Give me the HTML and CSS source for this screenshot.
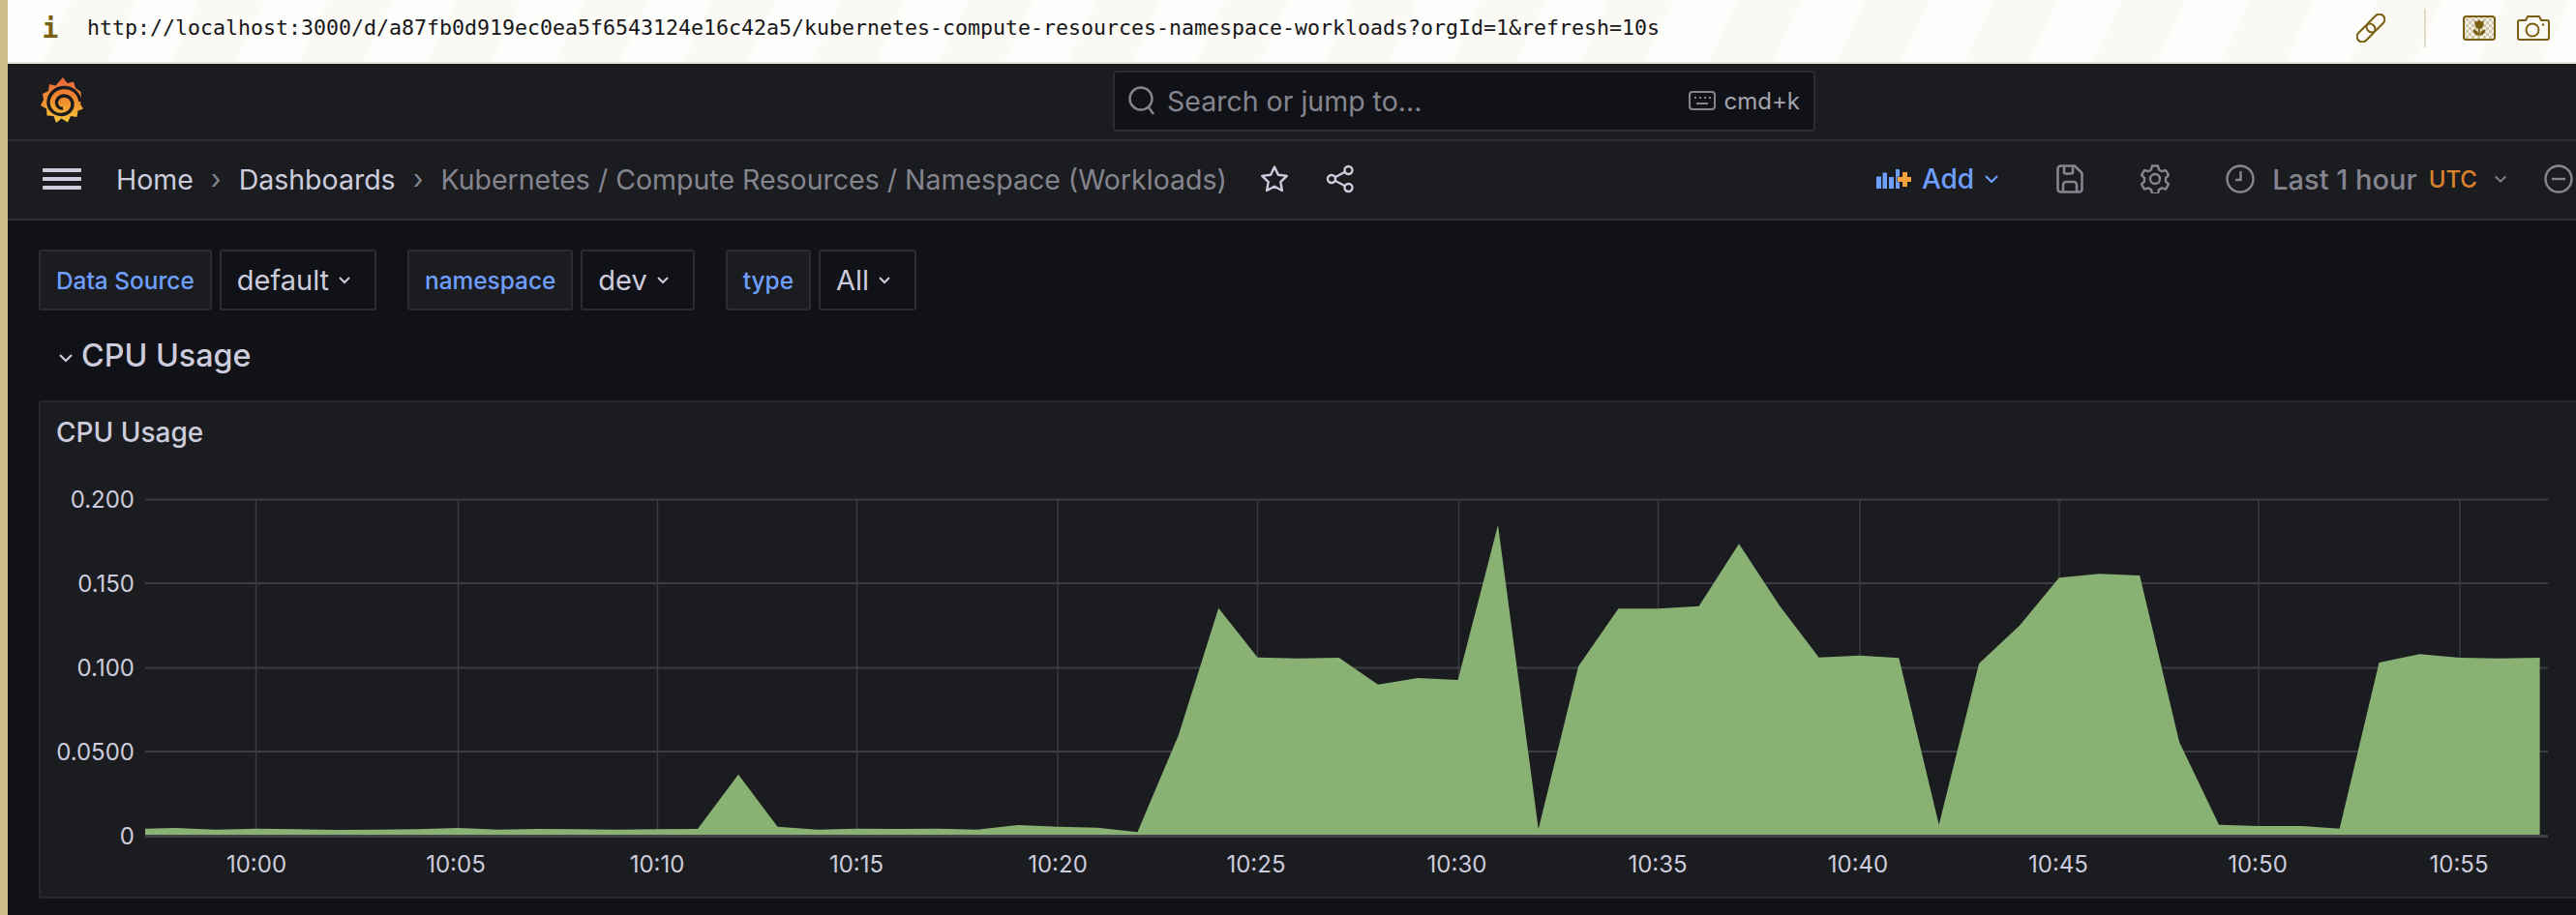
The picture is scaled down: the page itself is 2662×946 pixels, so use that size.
FILE: index.html
```html
<!DOCTYPE html>
<html lang="en">
<head>
<meta charset="utf-8">
<title>Kubernetes / Compute Resources / Namespace (Workloads)</title>
<link rel="stylesheet" href="styles.css">
</head>
<body>
<div class="edge"></div>
<div class="app">
  <header class="urlbar">
    <span class="info">i</span>
    <span class="url">http://localhost:3000/d/a87fb0d919ec0ea5f6543124e16c42a5/kubernetes-compute-resources-namespace-workloads?orgId=1&amp;refresh=10s</span>
    <svg class="ub-link" viewBox="0 0 30 30" fill="none" stroke="#7a5f12" stroke-width="2"><g transform="rotate(45 15 15)"><rect x="9.500" y="-3" width="11" height="22" rx="5.500"/><rect x="9.500" y="11" width="11" height="22" rx="5.500"/></g></svg>
    <span class="ub-sep"></span>
    <svg class="ub-tulip" viewBox="0 0 34 26"><defs><pattern id="chk" width="6" height="6" patternUnits="userSpaceOnUse"><rect width="6" height="6" fill="#f4f2e8"/><rect width="3" height="3" fill="#cfc9a8"/><rect x="3" y="3" width="3" height="3" fill="#cfc9a8"/></pattern></defs><rect x="1" y="1" width="32" height="24" rx="2.500" fill="url(#chk)" stroke="#7a5f12" stroke-width="2"/><path d="M12.500 5l2.200 1.600L17 4.600l2.300 2 2.200-1.600v4.200a4.500 4.500 0 0 1-9 0zM16.200 13h1.600v8h-1.600zM10.500 14.500c3 0 5.500 2 6 6-3.500 0-5.500-2-6-6zM23.500 14.500c-3 0-5.500 2-6 6 3.500 0 5.500-2 6-6z" fill="#7a5f12"/></svg>
    <svg class="ub-cam" viewBox="0 0 34 26" fill="none" stroke="#7a5f12" stroke-width="2" stroke-linejoin="round"><path d="M3 5h6l2-4h12l2 4h6a2 2 0 0 1 2 2v16a2 2 0 0 1-2 2H3a2 2 0 0 1-2-2V7a2 2 0 0 1 2-2z"/><circle cx="16" cy="15" r="6.500"/><circle cx="27" cy="9.500" r="1.200" fill="#7a5f12" stroke="none"/></svg>
  </header>

  <nav class="topnav">
    <svg class="logo" viewBox="0 0 44 48">
      <defs><linearGradient id="gr" x1="0" y1="0" x2="0" y2="1"><stop offset="0" stop-color="#e8623a"/><stop offset=".55" stop-color="#f0932f"/><stop offset="1" stop-color="#f6c53b"/></linearGradient></defs>
      <path d="M23 0l4.500 6 6.500-1.500 2 6.500 5.500 4 .5 9-1 3.500 3 5-5.500 2-1 6.500-6.500-1-3 6.500-6.500-4-5.500 4.500-2.500-7-7-.5-.5-7L0 29l3-6-1-6 6-3 1-7 6.500 1.500z" fill="url(#gr)"/>
      <path d="M41 25C39.500 15.500 32 10 23.500 10.500 14.500 11 8 18 8 26c0 7 6 12.500 13.500 12.500 6.500 0 11.500-5 11.500-10.500 0-5.500-4.500-9.500-9.500-9-4.500.5-7.500 4-7 8 .5 3 3 5.500 6.500 5" fill="none" stroke="#1b1c20" stroke-width="3.400"/>
    </svg>
    <div class="search">
      <svg class="i-search" viewBox="0 0 28 30" fill="none" stroke="#84858f" stroke-width="2.400"><circle cx="13" cy="13" r="11.500"/><path d="M21 22l5 7"/></svg>
      <span class="search-text">Search or jump to...</span>
      <svg class="i-kbd" viewBox="0 0 28 24" fill="none" stroke="#84858f" stroke-width="2"><rect x="1" y="3" width="26" height="18" rx="3"/><path d="M6 9h2M11 9h2M16 9h2M21 9h2M8 15h12" stroke-width="2.200"/></svg>
      <span class="search-key">cmd+k</span>
    </div>
  </nav>

  <div class="toolbar">
    <div class="burger"><span></span><span></span><span></span></div>
    <span class="crumb">Home</span>
    <span class="sep">›</span>
    <span class="crumb">Dashboards</span>
    <span class="sep">›</span>
    <span class="crumb current">Kubernetes / Compute Resources / Namespace (Workloads)</span>
    <svg class="i-star" viewBox="0 0 30 30" fill="none" stroke="#ccccdc" stroke-width="2.400" stroke-linejoin="round"><path d="M15 2.500l3.900 8.200 8.900 1.200-6.500 6.200 1.600 8.900-7.900-4.300-7.900 4.300 1.600-8.900-6.500-6.200 8.900-1.200z"/></svg>
    <svg class="i-share" viewBox="0 0 30 30" fill="none" stroke="#ccccdc" stroke-width="2.400"><circle cx="23.500" cy="6" r="4"/><circle cx="6" cy="15" r="4"/><circle cx="23.500" cy="24" r="4"/><path d="M9.600 13.200l10.300-5.400M9.600 16.800l10.300 5.400"/></svg>
    <svg class="i-add" viewBox="0 0 36 20"><path d="M0 7.500h5V20H0zM6.500 3.500h4.500V20H6.500zM13 8h5v12h-5zM20 0h4v20h-4z" fill="#6e9fff"/><path d="M27 3h5v5h5v5h-5v5h-5v-5h-5V8h5z" fill="#f2a23b" stroke="#1b1c20" stroke-width="1" paint-order="stroke"/></svg>
    <span class="add-text">Add</span>
    <svg class="chev chev-add" viewBox="0 0 16 10" fill="none" stroke="#6e9fff" stroke-width="2.200"><path d="M2 2l6 6 6-6"/></svg>
    <svg class="i-save" viewBox="0 0 28 30" fill="none" stroke="#84858f" stroke-width="2.600" stroke-linejoin="round"><path d="M4 1.500h15l7.500 7.500v16.500a3 3 0 0 1-3 3h-19a3 3 0 0 1-3-3v-21a3 3 0 0 1 3-3z"/><path d="M8 2v6a1.500 1.500 0 0 0 1.500 1.500h6A1.500 1.500 0 0 0 17 8V2M7 28v-7a3 3 0 0 1 3-3h8a3 3 0 0 1 3 3v7"/></svg>
    <svg class="i-gear" viewBox="0 0 30 30" fill="none" stroke="#84858f" stroke-width="2.400" stroke-linejoin="round"><path d="M12 1.500h6l1 4 3 1.700 4-1.200 3 5.200-3 2.800v3.600l3 2.800-3 5.200-4-1.200-3 1.700-1 4h-6l-1-4-3-1.700-4 1.200-3-5.200 3-2.800v-3.600L1 11.200 4 6l4 1.200 3-1.700z"/><circle cx="15" cy="15" r="5"/></svg>
    <svg class="i-clock" viewBox="0 0 30 30" fill="none" stroke="#84858f" stroke-width="2.400"><circle cx="15" cy="15" r="13.500"/><path d="M15.500 7v9H10"/></svg>
    <span class="range">Last 1 hour</span>
    <span class="utc">UTC</span>
    <svg class="chev chev-range" viewBox="0 0 16 10" fill="none" stroke="#84858f" stroke-width="2.200"><path d="M2 2l6 6 6-6"/></svg>
    <svg class="i-zoom" viewBox="0 0 30 30" fill="none" stroke="#84858f" stroke-width="2.400"><circle cx="15" cy="15" r="13.500"/><path d="M8 15h14"/></svg>
  </div>

  <main class="dash">
    <div class="filters">
      <span class="f-label">Data Source</span>
      <span class="f-value">default<svg class="chev-f" viewBox="0 0 14 10" fill="none" stroke="#ccccdc" stroke-width="2"><path d="M2 2l5 5 5-5"/></svg></span>
      <span class="f-label f-next">namespace</span>
      <span class="f-value">dev<svg class="chev-f" viewBox="0 0 14 10" fill="none" stroke="#ccccdc" stroke-width="2"><path d="M2 2l5 5 5-5"/></svg></span>
      <span class="f-label f-next">type</span>
      <span class="f-value">All<svg class="chev-f" viewBox="0 0 14 10" fill="none" stroke="#ccccdc" stroke-width="2"><path d="M2 2l5 5 5-5"/></svg></span>
    </div>
    <div class="row-head">
      <svg class="chev-row" viewBox="0 0 16 10" fill="none" stroke="#ccccdc" stroke-width="2.200"><path d="M2 2l6 6 6-6"/></svg>
      <span class="row-title">CPU Usage</span>
    </div>
    <section class="panel">
      <h2 class="panel-title">CPU Usage</h2>
      <svg class="chart" viewBox="42 480 2622 447" preserveAspectRatio="xMinYMin meet">
        <g class="grid">
          <path d="M150 516.500H2633M150 603H2633M150 690.500H2633M150 777H2633"/>
        </g>
        <g class="grid-v">
          <path d="M264.500 516V865M473.500 516V865M679.500 516V865M885.500 516V865M1093 516V865M1299.500 516V865M1507.500 516V865M1713.500 516V865M1922 516V865M2128 516V865M2334 516V865M2542 516V865"/>
        </g>
        <polygon class="area" points="150,856.700 181.600,856 223,857.700 264.500,856.700 306,857.300 347.400,858 388.800,857.700 430.300,857.300 473.500,856 513.200,857.700 555,857 596,857.300 637,857.700 679.500,857.300 721,857 763,800.700 803.500,854.700 845,857.700 885.500,856.700 927.500,857 969,856.700 1010.500,857.700 1052,853 1093,854.700 1134,855.700 1175.500,860.300 1217.900,760 1259.200,628.700 1299.500,679.700 1341.300,680.700 1383.700,680 1424,707.700 1465.300,701 1506.600,703 1548,542.700 1589.800,857.300 1631,689 1672.400,629.300 1713.300,629.300 1755.600,626.700 1797,562.300 1838.800,626 1879.600,679.700 1921.900,677.700 1962.300,680.300 2003.700,852.700 2045.100,686 2087,646.700 2127.900,597.300 2169.300,593.300 2211.200,595 2252.100,767.300 2293,852.700 2333.900,854 2378.800,854 2417.700,856.700 2458.500,685 2500.400,676.300 2541.800,680 2583.200,680.700 2624.600,680 2624.600,863 150,863"/>
        <path class="axis" d="M150 864.500H2633"/>
        <g class="ylabels">
          <text x="139" y="525">0.200</text>
          <text x="139" y="611.500">0.150</text>
          <text x="139" y="699">0.100</text>
          <text x="139" y="785.500">0.0500</text>
          <text x="139" y="873">0</text>
        </g>
        <g class="xlabels">
          <text x="265" y="902">10:00</text>
          <text x="471" y="902">10:05</text>
          <text x="679" y="902">10:10</text>
          <text x="885" y="902">10:15</text>
          <text x="1093" y="902">10:20</text>
          <text x="1298" y="902">10:25</text>
          <text x="1505.500" y="902">10:30</text>
          <text x="1713" y="902">10:35</text>
          <text x="1920" y="902">10:40</text>
          <text x="2127" y="902">10:45</text>
          <text x="2333" y="902">10:50</text>
          <text x="2541" y="902">10:55</text>
        </g>
      </svg>
    </section>
  </main>
</div>
</body>
</html>
```
FILE: styles.css
```css
* { box-sizing: border-box; }
html, body { margin: 0; height: 100%; }
body {
  display: flex;
  width: 2662px;
  height: 946px;
  overflow: hidden;
  background: #111217;
  font-family: Inter, "Liberation Sans", sans-serif;
  color: #ccccdc;
}
.edge { width: 8px; flex: none; background: #cdbf87; }
.app { width: 2654px; flex: none; display: flex; flex-direction: column; overflow: hidden; }

.urlbar {
  height: 66px;
  flex: none;
  display: flex;
  align-items: center;
  border-bottom: 2px solid #e6e5df;
  background: repeating-linear-gradient(115deg, #fdfdfb 0 60px, #faf9f4 60px 120px);
  padding-bottom: 6px;
}
.info {
  margin-left: 37px;
  width: 14px;
  font: 700 28px "DejaVu Sans Mono", monospace;
  color: #7a5f12;
  display: flex;
  justify-content: center;
}
.url {
  margin-left: 31px;
  font: 400 21.6px/28px "DejaVu Sans Mono", monospace;
  color: #17171a;
  white-space: nowrap;
}
.ub-link { width: 30px; height: 30px; margin-left: 720px; flex: none; }
.ub-sep { width: 2px; height: 40px; background: #e2dcc6; margin-left: 40px; flex: none; }
.ub-tulip { width: 34px; height: 26px; margin-left: 38px; flex: none; }
.ub-cam { width: 34px; height: 26px; margin-left: 22px; flex: none; }

.topnav {
  height: 80px;
  flex: none;
  display: flex;
  align-items: center;
  padding: 0 0 2px 34px;
  background: #1b1c20;
  border-bottom: 2px solid #2a2c30;
}
.logo { width: 44px; height: 48px; flex: none; }
.search {
  margin-left: 1064px;
  width: 726px;
  height: 63px;
  display: flex;
  align-items: center;
  padding: 0 14px 0 14px;
  background: #111217;
  border: 2px solid #2c2d32;
  border-radius: 4px;
}
.i-search { width: 28px; height: 30px; flex: none; }
.search-text { margin-left: 12px; font-size: 28.5px; color: #84858f; flex: 1; }
.i-kbd { width: 28px; height: 24px; flex: none; }
.search-key { margin-left: 9px; font-size: 24px; color: #a3a4ad; }

.toolbar {
  height: 82px;
  flex: none;
  display: flex;
  align-items: center;
  padding: 0 0 2px 36px;
  background: #1b1c20;
  border-bottom: 2px solid #2e3035;
  white-space: nowrap;
}
.burger { width: 40px; display: flex; flex-direction: column; gap: 5px; flex: none; }
.burger span { height: 4px; background: #ccccdc; border-radius: 1px; }
.crumb { font-size: 28.5px; color: #ccccdc; }
.burger + .crumb { margin-left: 36px; }
.crumb.current { color: #84858f; }
.sep { font-size: 28px; color: #84858f; margin: 0 18px; }
.i-star { width: 30px; height: 30px; margin-left: 34px; flex: none; }
.i-share { width: 30px; height: 30px; margin-left: 38px; flex: none; }
.i-add { width: 36px; height: 20px; margin-left: 539px; flex: none; }
.add-text { margin-left: 11px; font-size: 28px; font-weight: 500; color: #6e9fff; }
.chev { flex: none; }
.chev-add { width: 16px; height: 10px; margin-left: 10px; }
.i-save { width: 28px; height: 30px; margin-left: 59px; flex: none; }
.i-gear { width: 30px; height: 30px; margin-left: 59px; flex: none; }
.i-clock { width: 30px; height: 30px; margin-left: 58px; flex: none; }
.range { margin-left: 18px; font-size: 29px; font-weight: 500; color: #84858f; }
.utc { margin-left: 12px; font-size: 24px; font-weight: 500; color: #d9822b; }
.chev-range { width: 14px; height: 10px; margin-left: 17px; }
.i-zoom { width: 30px; height: 30px; margin-left: 38px; flex: none; }

.dash { flex: 1; padding: 30px 0 0 32px; background: #111217; min-height: 0; }
.filters { display: flex; align-items: stretch; height: 63px; }
.f-label, .f-value {
  display: flex;
  align-items: center;
  border: 2px solid #2a2c30;
  border-radius: 3px;
  white-space: nowrap;
}
.f-label {
  padding: 0 16px;
  background: #1b1c20;
  font-size: 24.4px;
  font-weight: 500;
  color: #6e9fff;
}
.f-next { margin-left: 32px; }
.f-value {
  margin-left: 8px;
  padding: 0 24px 0 16px;
  background: #111217;
  font-size: 29px;
  color: #ccccdc;
}
.chev-f { width: 14px; height: 10px; margin-left: 9px; flex: none; }
.row-head { height: 93px; display: flex; align-items: center; padding-left: 20px; }
.chev-row { width: 16px; height: 10px; margin-top: 4px; flex: none; }
.row-title { margin-left: 8px; font-size: 32.3px; font-weight: 500; color: #ccccdc; }

.panel {
  height: 515px;
  width: 2640px;
  background: #1b1c20;
  border: 2px solid #26282c;
  border-radius: 3px;
  display: flex;
  flex-direction: column;
}
.panel-title {
  margin: 0;
  height: 64px;
  padding: 14px 0 0 16px;
  font-size: 28px;
  line-height: 34px;
  font-weight: 500;
  color: #ccccdc;
}
.chart { width: 2622px; height: 447px; flex: none; }
.grid path { stroke: #3c3d41; stroke-width: 2; fill: none; }
.grid-v path { stroke: #3a3b3f; stroke-width: 1.500; fill: none; }
.area { fill: #8ab174; }
.axis { stroke: #3f4044; stroke-width: 3; }
.ylabels text { font-family: Inter, sans-serif; font-size: 24px; fill: #ccccdc; text-anchor: end; }
.xlabels text { font-family: Inter, sans-serif; font-size: 24px; fill: #ccccdc; text-anchor: middle; }
```
